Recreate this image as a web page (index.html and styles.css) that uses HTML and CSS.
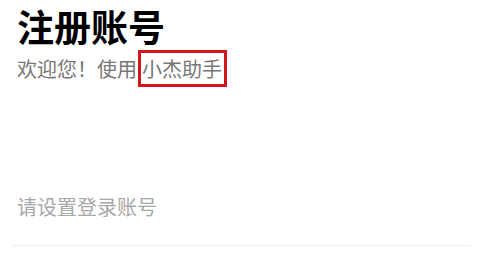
FILE: index.html
```html
<!DOCTYPE html>
<html lang="zh">
<head>
<meta charset="utf-8">
<link rel="stylesheet" href="styles.css">
</head>
<body>
<div class="page">
  <h1 class="title">注册账号</h1>
  <p class="subtitle">欢迎您！使用<span class="mark">小杰助手</span></p>
  <div class="field">
    <input class="input" type="text" placeholder="请设置登录账号">
  </div>
</div>
</body>
</html>
```
FILE: styles.css
```css
html, body {
  margin: 0;
  padding: 0;
  background: #ffffff;
}
.page {
  font-family: "Noto Sans CJK SC", "Noto Sans", sans-serif;
  padding: 0 7px 0 12px;
}
.title {
  margin: 0 0 0 5px;
  font-size: 37px;
  font-weight: 700;
  line-height: 52px;
  color: #000;
}
.subtitle {
  margin: 0 0 0 5px;
  font-size: 20px;
  line-height: 34px;
  color: #777777;
}
.mark {
  margin-left: 1px;
  border: 3px solid #d0161b;
  padding: 1px 2px 1px 1px;
}
.field {
  margin-top: 106px;
  border-bottom: 1px solid #eeeeee;
  padding: 0 0 23px 0;
}
.input {
  display: block;
  border: none;
  outline: none;
  padding: 0 0 0 5px;
  margin: 0;
  font-family: "Noto Sans CJK SC", "Noto Sans", sans-serif;
  font-size: 20px;
  line-height: 30px;
  height: 30px;
  width: 100%;
  box-sizing: border-box;
  background: transparent;
  color: #333;
}
.input::placeholder {
  color: #a8a8a8;
}
```
